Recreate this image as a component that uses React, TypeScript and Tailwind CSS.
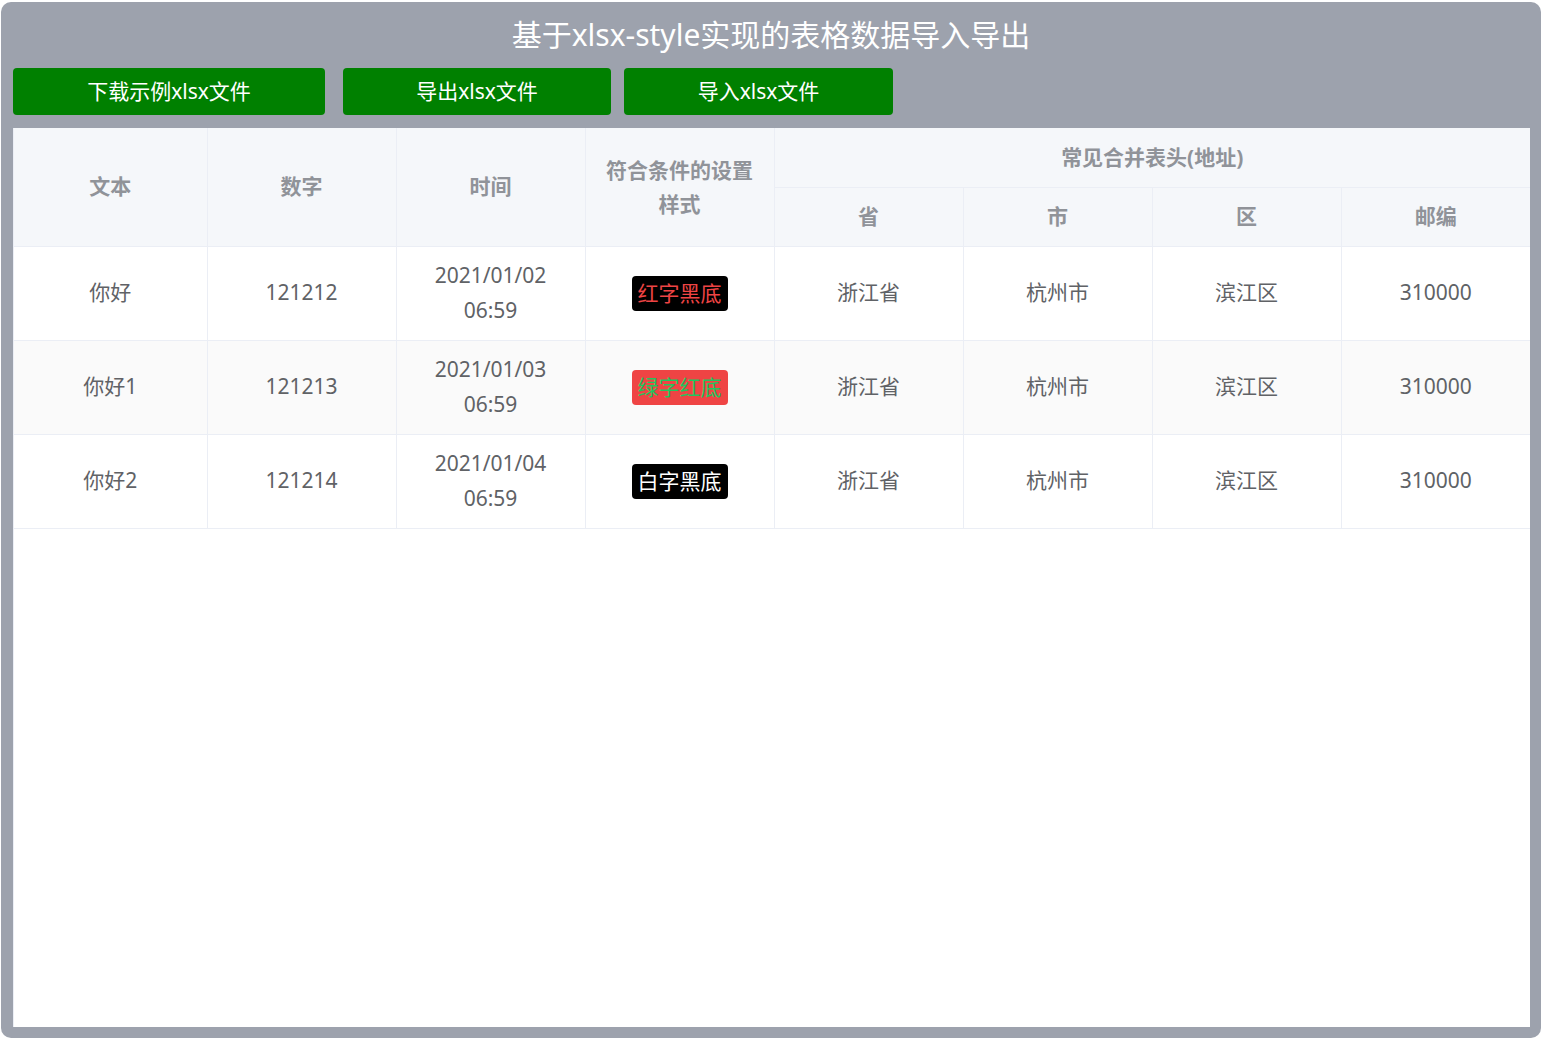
import React from "react";

const font = { fontFamily: '"Noto Sans", "Noto Sans CJK SC", sans-serif' };

type Row = {
  text: string;
  num: string;
  date: string;
  time: string;
  tag: string;
  tagCls: string;
};

const rows: Row[] = [
  { text: "你好", num: "121212", date: "2021/01/02", time: "06:59", tag: "红字黑底", tagCls: "bg-black text-[#ef4444]" },
  { text: "你好1", num: "121213", date: "2021/01/03", time: "06:59", tag: "绿字红底", tagCls: "bg-[#ef4444] text-[#22c55e]" },
  { text: "你好2", num: "121214", date: "2021/01/04", time: "06:59", tag: "白字黑底", tagCls: "bg-black text-white" },
];

export default function App() {
  const th = "border-r border-b border-[#ebeef5] bg-[#f5f7fa] text-[#909399] font-bold text-[21px] text-center align-middle p-0";
  const td = "border-r border-b border-[#ebeef5] text-[#606266] text-[21px] text-center align-middle p-0 h-[94px]";
  return (
    <div className="w-full h-[1038px] bg-white pt-[2px] px-[1px]" style={font}>
      <div className="h-[1036px] w-[1540px] bg-[#9da2ad] rounded-[10px] px-[12px] flex flex-col">
        <div className="h-[66px] flex items-center justify-center text-white text-[30px] leading-none">
          基于xlsx-style实现的表格数据导入导出
        </div>
        <div className="flex h-[47px]">
          <button className="w-[312px] h-[47px] bg-[#008000] text-white text-[21px] rounded-[4px]">下载示例xlsx文件</button>
          <button className="ml-[18px] w-[268px] h-[47px] bg-[#008000] text-white text-[21px] rounded-[4px]">导出xlsx文件</button>
          <button className="ml-[13px] w-[269px] h-[47px] bg-[#008000] text-white text-[21px] rounded-[4px]">导入xlsx文件</button>
        </div>
        <div className="mt-[13px] w-[1517px] h-[899px] bg-white border-l border-[#ebeef5]">
          <table className="border-collapse table-fixed w-[1516px]">
            <colgroup>
              <col className="w-[193px]" />
              <col className="w-[189px]" />
              <col className="w-[189px]" />
              <col className="w-[189px]" />
              <col className="w-[189px]" />
              <col className="w-[189px]" />
              <col className="w-[189px]" />
              <col className="w-[189px]" />
            </colgroup>
            <thead>
              <tr className="h-[59px]">
                <th rowSpan={2} className={th}>文本</th>
                <th rowSpan={2} className={th}>数字</th>
                <th rowSpan={2} className={th}>时间</th>
                <th rowSpan={2} className={th + " leading-[34px]"}>
                  符合条件的设置
                  <br />
                  样式
                </th>
                <th colSpan={4} className={th + " border-r-0"}>常见合并表头(地址)</th>
              </tr>
              <tr className="h-[59px]">
                <th className={th}>省</th>
                <th className={th}>市</th>
                <th className={th}>区</th>
                <th className={th + " border-r-0"}>邮编</th>
              </tr>
            </thead>
            <tbody>
              {rows.map((r, i) => (
                <tr key={i} className={i % 2 === 1 ? "bg-[#fafafa]" : "bg-white"}>
                  <td className={td}>{r.text}</td>
                  <td className={td}>{r.num}</td>
                  <td className={td + " leading-[35px]"}>
                    {r.date}
                    <br />
                    {r.time}
                  </td>
                  <td className={td}>
                    <span className={"inline-block px-[6px] h-[35px] leading-[35px] rounded-[4px] " + r.tagCls}>{r.tag}</span>
                  </td>
                  <td className={td}>浙江省</td>
                  <td className={td}>杭州市</td>
                  <td className={td}>滨江区</td>
                  <td className={td + " border-r-0"}>310000</td>
                </tr>
              ))}
            </tbody>
          </table>
        </div>
      </div>
    </div>
  );
}
